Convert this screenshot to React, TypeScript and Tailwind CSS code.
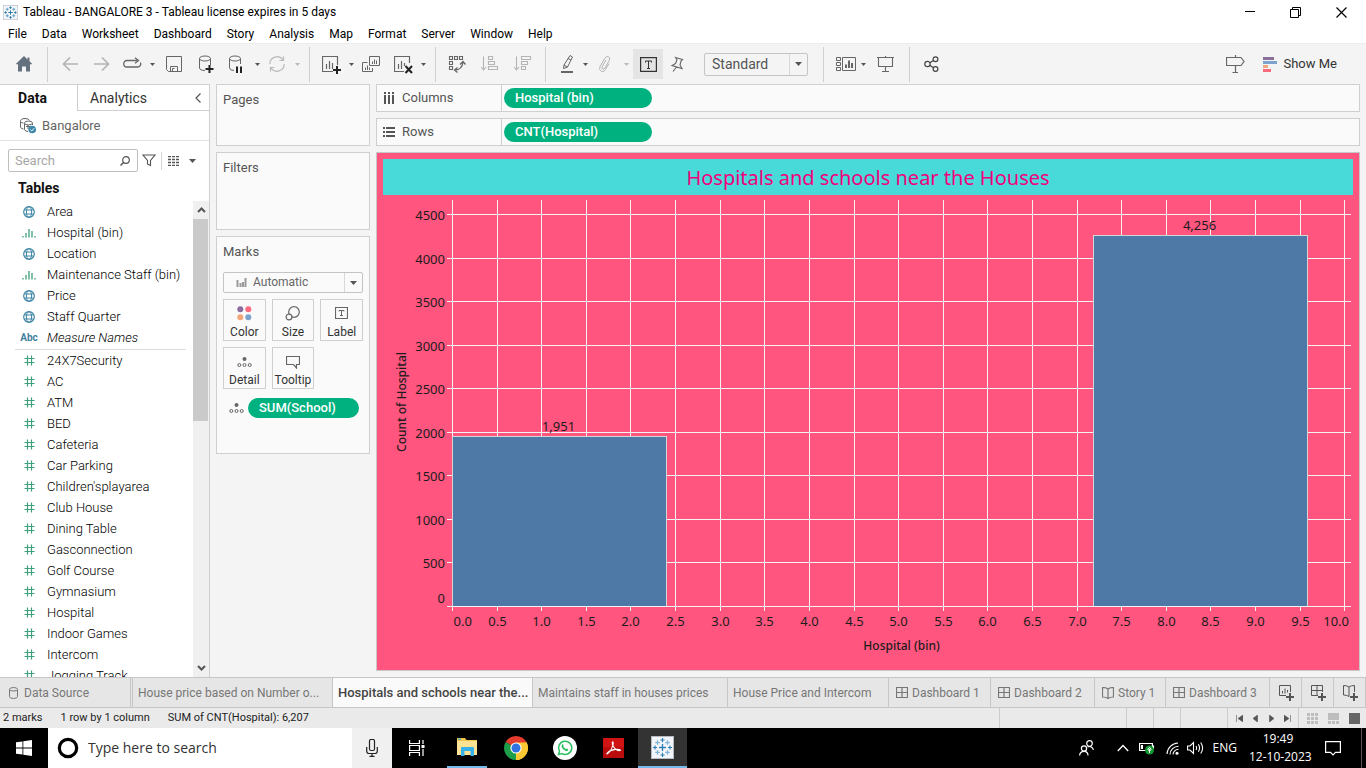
import { useLayoutEffect, useRef, useState, type ReactNode } from "react";

type IconProps = { size?: number; w?: number; h?: number; className?: string; children: ReactNode };

function Svg({ size = 20, w, h, className = "", children }: IconProps) {
  const width = w ?? size;
  const height = h ?? size;
  return (
    <svg
      width={width}
      height={height}
      viewBox={`0 0 ${width} ${height}`}
      fill="none"
      stroke="currentColor"
      aria-hidden="true"
      className={`shrink-0 ${className}`}
    >
      {children}
    </svg>
  );
}

/* ---------- Tableau mark ---------- */

function TableauMark({ size, light = false }: { size: number; light?: boolean }) {
  const plus = (x: number, y: number, r: number, color: string, sw: number) => (
    <path key={`${x}-${y}`} d={`M${x - r} ${y}H${x + r}M${x} ${y - r}V${y + r}`} stroke={color} strokeWidth={sw} />
  );
  const dark = light ? "#2f7fb5" : "#1f6f9f";
  const pale = light ? "#7fb2d6" : "#4a94bb";
  return (
    <svg width={size} height={size} viewBox="0 0 24 24" fill="none" aria-hidden="true" className="shrink-0">
      <rect x="0.5" y="0.5" width="23" height="23" fill="#f2f6fa" stroke="#b9bec4" />
      {plus(12, 12, 3.6, dark, 1.4)}
      {plus(12, 4.2, 2.2, dark, 1.2)}
      {plus(12, 19.8, 2.2, dark, 1.2)}
      {plus(4.2, 12, 2.2, dark, 1.2)}
      {plus(19.8, 12, 2.2, dark, 1.2)}
      {plus(6.8, 6.8, 2.4, pale, 1.3)}
      {plus(17.2, 6.8, 2.4, pale, 1.3)}
      {plus(6.8, 17.2, 2.4, pale, 1.3)}
      {plus(17.2, 17.2, 2.4, pale, 1.3)}
    </svg>
  );
}

/* ---------- Title and menu bars ---------- */

const menus = ["File", "Data", "Worksheet", "Dashboard", "Story", "Analysis", "Map", "Format", "Server", "Window", "Help"];

function TitleBar() {
  return (
    <header className="flex h-6 shrink-0 items-center bg-white pl-[3px] text-black">
      <TableauMark size={15} />
      <h1 className="ml-[5px] flex-1 text-[12px] leading-4">Tableau - BANGALORE 3 - Tableau license expires in 5 days</h1>
      <button aria-label="Minimize" className="flex w-[46px] justify-center">
        <Svg size={11}><path d="M0 4.500H10" /></Svg>
      </button>
      <button aria-label="Restore" className="flex w-[45px] justify-center">
        <Svg size={11}><path d="M.5 2.500H8.500V10.500H.5ZM2.500 2.500V.5H10.500V8.500H8.500" /></Svg>
      </button>
      <button aria-label="Close" className="mr-[2px] flex w-[46px] justify-center">
        <Svg size={11}><path d="M.5 .5L10.500 10.500M10.500 .5L.5 10.500" strokeWidth="1.200" /></Svg>
      </button>
    </header>
  );
}

function MenuBar() {
  return (
    <nav className="flex h-[19px] shrink-0 items-center gap-[15px] bg-white pl-2 text-[12px] leading-4 text-black">
      {menus.map((m) => (
        <button key={m}>{m}</button>
      ))}
    </nav>
  );
}

/* ---------- Toolbar ---------- */

function Tool({ label, className, children }: { label: string; className: string; children: ReactNode }) {
  return (
    <button aria-label={label} title={label} className={`flex h-[30px] shrink-0 items-center justify-center ${className}`}>
      {children}
    </button>
  );
}

function Caret({ label, faded = false, className = "" }: { label: string; faded?: boolean; className?: string }) {
  return (
    <button aria-label={label} className={`flex h-[30px] w-3 shrink-0 items-center justify-center ${faded ? "text-[#b9b9b9]" : "text-[#555]"} ${className}`}>
      <Svg w={5} h={3}><path d="M0 0H5L2.500 3Z" fill="currentColor" stroke="none" /></Svg>
    </button>
  );
}

function Sep({ className = "" }: { className?: string }) {
  return <span className={`h-[35px] w-px shrink-0 bg-[#d0d0d0] ${className}`} />;
}

function DropArrow() {
  return (
    <svg width="7" height="5" viewBox="0 0 7 5" aria-hidden="true" className="pointer-events-none absolute right-[5px] top-1/2 -translate-y-1/2">
      <path d="M0 .5H7L3.500 4.500Z" fill="#555" />
    </svg>
  );
}

function Toolbar() {
  return (
    <div role="toolbar" aria-label="Main" className="flex h-[41px] shrink-0 items-center border-t border-[#ececec] bg-[#f4f4f4] text-[#666]">
      <Tool label="Start page" className="w-[47px] text-[#64707d]">
        <Svg size={18}><path d="M9 1L.5 9.300H3V16.500H7V11.500H11V16.500H15V9.300H17.500L14.500 6.300V2.500H12.500V4.400Z" fill="currentColor" stroke="none" /></Svg>
      </Tool>
      <Sep />
      <Tool label="Undo" className="ml-[6px] w-8 text-[#b4b4b4]">
        <Svg size={16}><path d="M16 8H1M8 1.500L1.500 8L8 14.500" strokeWidth="1.700" /></Svg>
      </Tool>
      <Tool label="Redo" className="w-8 text-[#b4b4b4]">
        <Svg size={16}><path d="M0 8H15M8 1.500L14.500 8L8 14.500" strokeWidth="1.700" /></Svg>
      </Tool>
      <Tool label="Replay" className="w-7">
        <Svg w={19} h={14}>
          <path d="M8 3.500H4A3.250 3.250 0 0 0 4 10H14.500A3.250 3.250 0 0 0 17.500 5.500M6 3.500H14" strokeWidth="1.300" />
          <path d="M12 .8L15.500 3.500L12 6.200" strokeWidth="1.300" />
        </Svg>
      </Tool>
      <Caret label="Replay options" />
      <Tool label="Save" className="w-8">
        <Svg size={17}><path d="M.5 .5H15.500V15.500H2.500L.5 13.500ZM4.500 15.500V10.500H11.500V15.500M6.500 15.500V12.500H8.500" /></Svg>
      </Tool>
      <Tool label="New data source" className="w-8">
        <Svg size={18}>
          <ellipse cx="8" cy="3.500" rx="5.500" ry="2.500" />
          <path d="M2.500 3.500V13Q3 15.500 8 15.500M13.500 3.500V10" />
          <path d="M8.500 14H16.500M12.500 10V18" stroke="#222" strokeWidth="2" />
        </Svg>
      </Tool>
      <Tool label="Pause updates" className="w-7">
        <Svg size={18}>
          <ellipse cx="8" cy="3.500" rx="5.500" ry="2.500" />
          <path d="M2.500 3.500V13Q3 15.500 7 15.500M13.500 3.500V9" />
          <path d="M10 11.500V18M14 11.500V18" stroke="#222" strokeWidth="2" />
        </Svg>
      </Tool>
      <Caret label="Pause options" className="ml-px" />
      <Tool label="Refresh" className="ml-px w-[26px] text-[#b9b9b9]">
        <Svg size={18}>
          <path d="M1.800 9A7.200 7.200 0 0 1 15 5M16.200 9A7.200 7.200 0 0 1 3 13" strokeWidth="1.200" />
          <path d="M11.500 5.500H15.500V1.500M6.500 12.500H2.500V16.500" strokeWidth="1.200" />
        </Svg>
      </Tool>
      <Caret label="Refresh options" faded className="ml-px" />
      <Sep className="ml-[6px]" />
      <Tool label="New worksheet" className="ml-[7px] w-7">
        <Svg size={19}>
          <path d="M11 16.500H.5V1.500H15.500V10M4.500 14V9M7.500 14V6M10.500 14V8" strokeWidth="1.200" />
          <path d="M11 15H19M15 11V19" stroke="#222" strokeWidth="2" />
        </Svg>
      </Tool>
      <Caret label="Worksheet options" />
      <Tool label="Duplicate" className="w-7">
        <Svg size={18}>
          <path d="M7.500 1.500H17.500V10.500H7.500ZM5.500 7.500H.5V16.500H10.500V13M10.500 9V6.500M12.500 9V4.500M14.500 9V5.500M3.500 15V12.500M5.500 15V10.500M7.500 15V12.500" />
        </Svg>
      </Tool>
      <Tool label="Clear sheet" className="ml-1 w-7">
        <Svg size={19}>
          <path d="M10 16.500H.5V1.500H15.500V8M4.500 14V9M7.500 14V6M10.500 11V8" strokeWidth="1.200" />
          <path d="M11.500 11L18 18M18 11L11.500 18" stroke="#222" strokeWidth="2" />
        </Svg>
      </Tool>
      <Caret label="Clear options" />
      <Sep className="ml-[6px]" />
      <Tool label="Swap rows and columns" className="ml-[5px] w-8">
        <Svg size={18}>
          <path d="M1.500 1.500H4.500V4.500H1.500ZM6.500 1.500H9.500V4.500H6.500ZM11.500 1.500H14.500V4.500H11.500ZM1.500 6.500H4.500V9.500H1.500ZM1.500 11.500H4.500V14.500H1.500Z" strokeWidth="1.100" />
          <path d="M7 15Q14 15 15 7M12 9.500L15 6.500L17.500 9.500M9.500 12.500L6.500 15L9.500 17.500" strokeWidth="1.300" />
        </Svg>
      </Tool>
      <Tool label="Sort ascending" className="ml-px w-8 text-[#b4b4b4]">
        <Svg size={18}><path d="M2.500 1.500V15M0 12L2.500 15L5 12M7.500 1.500H11.500V4.500H7.500ZM7.500 6.500H13.500V9.500H7.500ZM7.500 11.500H16.500V14.500H7.500Z" strokeWidth="1.100" /></Svg>
      </Tool>
      <Tool label="Sort descending" className="ml-px w-8 text-[#b4b4b4]">
        <Svg size={18}><path d="M2.500 1.500V15M0 12L2.500 15L5 12M7.500 1.500H16.500V4.500H7.500ZM7.500 6.500H13.500V9.500H7.500ZM7.500 11.500H11.500V14.500H7.500Z" strokeWidth="1.100" /></Svg>
      </Tool>
      <Sep className="ml-[6px]" />
      <Tool label="Highlight" className="ml-2 w-[26px]">
        <Svg w={14} h={20}>
          <path d="M10 1.500L12.500 3L7.500 13L3.500 14.500L4 11ZM4 11L7.500 13M8 4.500L11 6" />
          <path d="M1 18H13" strokeWidth="2" />
        </Svg>
      </Tool>
      <Caret label="Highlight options" className="-ml-px" />
      <Tool label="Group members" className="w-7 text-[#b4b4b4]">
        <Svg size={18}><path d="M10 5L6 12Q5.500 14 7 14.200Q8.300 14.300 9 13L13.500 5Q14.500 2 12 1.500Q10 1.300 9 3L4 11.500Q2.500 15 5.500 16.500Q8 17.300 9.500 14.500L13 8.500" /></Svg>
      </Tool>
      <Caret label="Group options" faded className="ml-px" />
      <Tool label="Show mark labels" className="ml-px w-[30px] bg-[#e4e4e4] text-[#333]">
        <Svg w={17} h={15}>
          <path d="M.6 .6H16.400V14.400H.6Z" strokeWidth="1.200" />
          <path d="M5.500 5.500V4H11.500V5.500M8.500 4V11.500M7 11.500H10" />
        </Svg>
      </Tool>
      <Tool label="Fix axes" className="w-7">
        <Svg w={14} h={17}><path d="M5.500 1.500L12.500 3.500L11 5L10 9L12 12.500L2 9.500L5.500 7.500L7 3.800ZM6.500 11L3 15.500" strokeWidth="1.100" /></Svg>
      </Tool>
      <div className="relative ml-[13px] flex h-[23px] w-[104px] shrink-0 rounded-[2px] border border-[#c4c4c4]">
        <select aria-label="Fit" className="w-full appearance-none pl-[7px] text-[14px] leading-[21px] text-[#555] outline-none">
          <option>Standard</option>
          <option>Entire View</option>
        </select>
        <span className="pointer-events-none absolute right-[17px] top-0 h-full w-px bg-[#d8d8d8]" />
        <DropArrow />
      </div>
      <Sep className="ml-[15px]" />
      <Tool label="Show or hide cards" className="ml-[9px] w-[26px]">
        <Svg w={20} h={16}>
          <path d="M.5 1.500H4.500V4.500H.5ZM.5 6.500H4.500V9.500H.5ZM.5 11.500H4.500V14.500H.5ZM6.500 1.500H19.500V14.500H6.500Z" />
          <path d="M10 12V8.500M13 12V4.500M16 12V7" strokeWidth="2" />
        </Svg>
      </Tool>
      <Caret label="Card options" className="-ml-[2px]" />
      <Tool label="Presentation mode" className="w-8">
        <Svg w={17} h={17}><path d="M0 1.500H17M1.500 1.500V10.500H15.500V1.500M8.500 0V1.500M8.500 10.500V16M5 15.500H12" strokeWidth="1.100" /></Svg>
      </Tool>
      <Sep className="ml-2" />
      <Tool label="Share" className="ml-2 w-7 text-[#444]">
        <Svg size={16}>
          <circle cx="3.500" cy="8" r="2.700" strokeWidth="1.200" />
          <circle cx="11.500" cy="3.200" r="2.400" strokeWidth="1.200" />
          <circle cx="11.500" cy="13" r="2.400" strokeWidth="1.200" />
          <path d="M5.800 6.700L9.500 4.400M5.800 9.300L9.500 11.700" strokeWidth="1.200" />
        </Svg>
      </Tool>
      <span className="flex-1" />
      <Tool label="Guide" className="w-7">
        <Svg w={19} h={18}><path d="M.5 2.500H15L18 6.500L15 10.500H.5ZM9.500 0V2.500M9.500 10.500V17M6.500 17.500H12" strokeWidth="1.200" /></Svg>
      </Tool>
      <button className="ml-[14px] mr-[29px] flex items-center gap-[6px] text-[13px] leading-5 text-[#333]">
        <Svg w={14} h={15}>
          <path d="M0 1.500H11" stroke="#8b6f9b" strokeWidth="3" />
          <path d="M0 5.500H14" stroke="#7ea3cc" strokeWidth="3" />
          <path d="M0 9.500H5" stroke="#f2a67c" strokeWidth="3" />
          <path d="M0 13.500H8" stroke="#fb6a7c" strokeWidth="3" />
        </Svg>
        Show Me
      </button>
    </div>
  );
}

/* ---------- Data pane ---------- */

type FieldKind = "geo" | "bin" | "text" | "number";
const dimensions: { name: string; kind: FieldKind }[] = [
  { name: "Area", kind: "geo" },
  { name: "Hospital (bin)", kind: "bin" },
  { name: "Location", kind: "geo" },
  { name: "Maintenance Staff (bin)", kind: "bin" },
  { name: "Price", kind: "geo" },
  { name: "Staff Quarter", kind: "geo" },
  { name: "Measure Names", kind: "text" },
];
const measures = [
  "24X7Security", "AC", "ATM", "BED", "Cafeteria", "Car Parking", "Children'splayarea", "Club House", "Dining Table",
  "Gasconnection", "Golf Course", "Gymnasium", "Hospital", "Indoor Games", "Intercom", "Jogging Track",
];

function FieldIcon({ kind }: { kind: FieldKind }) {
  if (kind === "geo")
    return (
      <Svg size={12} className="text-[#3f86a6]">
        <circle cx="6" cy="6" r="5.300" strokeWidth="1.200" />
        <ellipse cx="6" cy="6" rx="2.600" ry="5.300" />
        <path d="M1.500 4H10.500M1.500 8H10.500" />
      </Svg>
    );
  if (kind === "bin")
    return (
      <Svg w={14} h={10} className="text-[#4aa583]">
        <path d="M1 8V9.500M4 5V9.500M7 1V9.500M10 3V9.500M13 8V9.500" strokeWidth="1.400" />
      </Svg>
    );
  if (kind === "text") return <span className="text-[10px] font-bold not-italic text-[#3f7f9c]">Abc</span>;
  return (
    <Svg size={11} className="text-[#3fa07c]">
      <path d="M3.500 .5V10.500M7.500 .5V10.500M.5 3.500H10.500M.5 7.500H10.500" strokeWidth="1.200" />
    </Svg>
  );
}

function Field({ name, kind }: { name: string; kind: FieldKind }) {
  return (
    <li className={`flex h-[21px] items-center text-[13px] leading-4 text-black ${kind === "text" ? "italic" : ""}`}>
      <span className="ml-[17px] mr-[6px] flex w-6 justify-center">
        <FieldIcon kind={kind} />
      </span>
      <span className="whitespace-nowrap font-light">{name}</span>
    </li>
  );
}

function DataPane() {
  return (
    <aside className="flex w-[210px] shrink-0 flex-col border-r border-t border-[#cfcfcf] bg-white">
      <div className="flex h-[26px] shrink-0" role="tablist">
        <button role="tab" aria-selected="true" className="w-[77px] pr-3 text-center text-[14px] font-bold leading-5 text-[#111]">Data</button>
        <div className="flex flex-1 items-center border-b border-l border-[#cfcfcf]">
          <button role="tab" aria-selected="false" className="flex-1 pl-3 text-left text-[14px] leading-5 text-[#333]">Analytics</button>
          <button aria-label="Collapse pane" className="mr-[7px] text-[#555]">
            <Svg w={7} h={10}><path d="M5.500 .5L1 5L5.500 9.500" strokeWidth="1.200" /></Svg>
          </button>
        </div>
      </div>
      <button className="flex h-[30px] shrink-0 items-center gap-[6px] border-b border-[#e2e2e2] pl-5 text-[13px] leading-4 text-[#666]">
        <Svg w={16} h={17}>
          <path d="M.5 4.500V10Q1 12 3.500 12M.5 4.500Q.5 1.500 5 1.500Q9 1.500 9.500 3.500M.5 4.500Q1 6 3.500 6M4.500 6.500V12.500Q5 14.500 8 14.500M12.500 6.500V8" />
          <ellipse cx="8.500" cy="6" rx="4" ry="1.900" />
          <path d="M6 9.500H10M8 8V12" />
          <circle cx="12.200" cy="12.500" r="3.800" fill="#3a87a8" stroke="none" />
          <path d="M10.300 12.600L11.800 14L14.200 11.200" stroke="#fff" />
        </Svg>
        Bangalore
      </button>
      <div className="flex shrink-0 items-center pl-2 pt-[8px] text-[#555]">
        <div className="relative flex h-[23px] w-[130px] items-center rounded-[2px] border border-[#bfbfbf]">
          <input aria-label="Search fields" placeholder="Search" className="h-full w-full bg-transparent pl-[6px] text-[13px] leading-5 outline-none placeholder:text-[#a6a6a6]" />
          <Svg size={10} className="absolute right-[7px]">
            <circle cx="6" cy="4" r="3.300" strokeWidth="1.200" /><path d="M3.600 6.400L.5 9.500" strokeWidth="1.400" />
          </Svg>
        </div>
        <button aria-label="Filter fields" className="ml-1">
          <Svg w={14} h={13}><path d="M1 1H13L8.500 6.500V11.500L5.500 10V6.500Z" strokeWidth="1.100" /></Svg>
        </button>
        <span className="ml-[5px] h-[18px] w-px bg-[#d6d6d6]" />
        <button aria-label="View as list" className="ml-[6px] flex items-center gap-[9px]">
          <Svg w={12} h={10}>
            <path d="M0 .5H12M0 3.500H12M0 6.500H12M0 9.500H12" strokeDasharray="3 1" strokeWidth="1.400" />
          </Svg>
          <Svg w={7} h={4}><path d="M0 0H7L3.500 4Z" fill="currentColor" stroke="none" /></Svg>
        </button>
      </div>
      <h2 className="shrink-0 pb-[4px] pl-[18px] pt-[7px] text-[14px] font-bold leading-[18px] text-[#111]">Tables</h2>
      <div className="flex min-h-0 flex-1">
        <div className="min-w-0 flex-1 overflow-hidden">
          <ul>
            {dimensions.map((f) => (
              <Field key={f.name} {...f} />
            ))}
          </ul>
          <div className="ml-[15px] mr-[7px] h-[2px] border-b border-[#dcdcdc]" />
          <ul>
            {measures.map((m) => (
              <Field key={m} name={m} kind="number" />
            ))}
          </ul>
        </div>
        <div className="flex w-4 shrink-0 flex-col items-center bg-[#f0f0f0] text-[#555]">
          <span className="flex h-[18px] items-center"><Svg w={9} h={6}><path d="M1 5L4.500 1.500L8 5" strokeWidth="2" /></Svg></span>
          <span className="h-[202px] w-full border-r border-[#f0f0f0] bg-[#cacaca]" />
          <span className="flex-1" />
          <span className="flex h-[18px] items-center"><Svg w={9} h={6}><path d="M1 1L4.500 4.500L8 1" strokeWidth="2" /></Svg></span>
        </div>
      </div>
    </aside>
  );
}

/* ---------- Cards ---------- */

function Card({ title, className, children }: { title: string; className: string; children?: ReactNode }) {
  return (
    <section className={`border border-[#cfcfcf] bg-[#fafafa] px-[6px] pt-[7px] ${className}`}>
      <h2 className="text-[13px] leading-4 text-[#555]">{title}</h2>
      {children}
    </section>
  );
}

const detailIcon = (
  <Svg w={15} h={12}>
    <circle cx="7.500" cy="3" r="2" fill="currentColor" stroke="none" />
    <circle cx="2.300" cy="9" r="1.500" /><circle cx="7.500" cy="9" r="1.500" /><circle cx="12.700" cy="9" r="1.500" />
  </Svg>
);

const markButtons: { label: string; icon: ReactNode }[] = [
  {
    label: "Color",
    icon: (
      <Svg w={15} h={15}>
        <g stroke="none">
          <circle cx="3.300" cy="3.300" r="3" fill="#8a6d9e" /><circle cx="11.300" cy="3.300" r="3" fill="#fd6a80" />
          <circle cx="3.300" cy="11.300" r="3" fill="#f3a57c" /><circle cx="11.300" cy="11.300" r="3" fill="#7ba2cd" />
        </g>
      </Svg>
    ),
  },
  { label: "Size", icon: <Svg w={15} h={15}><circle cx="9" cy="6" r="5.300" strokeWidth="1.200" /><circle cx="4" cy="11" r="2.900" strokeWidth="1.200" fill="#fafafa" /></Svg> },
  { label: "Label", icon: <Svg w={13} h={15}><path d="M.5 1.500H12.500V12.500H.5Z" strokeWidth="1.200" /><path d="M4 5.500V4.500H9V5.500M6.500 4.500V9.500M5 9.500H8" /></Svg> },
  { label: "Detail", icon: detailIcon },
  { label: "Tooltip", icon: <Svg w={14} h={14}><path d="M.5 1.500H13.500V9.500H10.500V13L7.500 9.500H.5Z" strokeWidth="1.200" /></Svg> },
];

function Cards() {
  return (
    <div className="flex w-[154px] shrink-0 flex-col gap-[6px]">
      <Card title="Pages" className="h-[62px]" />
      <Card title="Filters" className="h-[78px]" />
      <Card title="Marks" className="h-[218px]">
        <div className="relative mt-3 flex h-[21px] rounded-[2px] border border-[#c4c4c4] text-[#999]">
          <Svg w={11} h={10} className="absolute left-3 top-[5px]"><path d="M1.500 2V9M4.500 5V9M7 4V9M9.500 0V9" strokeWidth="2" /></Svg>
          <select aria-label="Mark type" className="w-full appearance-none pl-[29px] text-[12px] leading-[19px] text-[#666] outline-none">
            <option>Automatic</option>
            <option>Bar</option>
          </select>
          <span className="pointer-events-none absolute right-[17px] top-0 h-full w-px bg-[#d8d8d8]" />
          <DropArrow />
        </div>
        <div className="mt-[6px] grid grid-cols-3 gap-[6px]">
          {markButtons.map((b) => (
            <button key={b.label} className="flex h-[42px] flex-col items-center justify-between border border-[#cfcfcf] pt-[6px] text-[12px] leading-4 text-[#333]">
              <span className="flex h-[15px] items-center text-[#666]">{b.icon}</span>
              {b.label}
            </button>
          ))}
        </div>
        <div className="mt-[9px] flex items-center pl-[6px] text-[#666]">
          {detailIcon}
          <button className="ml-1 h-5 w-[111px] rounded-full bg-[#00b180] pl-[11px] text-left text-[13px] font-medium leading-5 text-white">SUM(School)</button>
        </div>
      </Card>
    </div>
  );
}

/* ---------- Shelves ---------- */

function Shelf({ label, icon, pill }: { label: string; icon: ReactNode; pill: string }) {
  return (
    <div className="flex h-7 shrink-0 border border-[#cfcfcf] bg-[#fafafa]">
      <div className="flex w-[125px] items-center gap-[6px] border-r border-[#cfcfcf] pl-[6px] text-[13px] leading-4 text-[#555]">
        {icon}
        {label}
      </div>
      <button className="ml-[2px] mt-[3px] h-5 w-[148px] rounded-full bg-[#00b180] pl-[11px] text-left text-[13px] font-medium leading-5 text-white">{pill}</button>
    </div>
  );
}

/* ---------- Chart ---------- */

const bars = [
  { from: 0, to: 2.4, value: 1951, label: "1,951" },
  { from: 7.18, to: 9.58, value: 4256, label: "4,256" },
];
const xTicks = Array.from({ length: 21 }, (_, i) => i / 2);
const yTicks = Array.from({ length: 10 }, (_, i) => i * 500);

function Chart() {
  const box = useRef<HTMLDivElement>(null);
  const [size, setSize] = useState({ w: 970, h: 474 });

  useLayoutEffect(() => {
    const el = box.current;
    if (!el) return;
    const measure = () => setSize({ w: el.clientWidth, h: el.clientHeight });
    measure();
    const observer = new ResizeObserver(measure);
    observer.observe(el);
    return () => observer.disconnect();
  }, []);

  const left = 69;
  const right = size.w - 2;
  const top = 5;
  const bottom = size.h - 64;
  const x = (v: number) => Math.round(left + (v * (right - left)) / 10.075) + 0.5;
  const y = (v: number) => Math.round(bottom - (v * (bottom - top)) / 4663) + 0.5;

  return (
    <div ref={box} className="min-h-0 flex-1 overflow-hidden">
      <svg width={size.w} height={size.h} role="img" aria-label="Histogram of hospital count" className="block font-['Noto_Sans',sans-serif] text-[13px]" fill="#1c1c1c">
        <g stroke="#f3f3f3" strokeWidth="1">
          {xTicks.map((t) => (
            <line key={t} x1={x(t)} x2={x(t)} y1={top} y2={bottom + 5} />
          ))}
          {yTicks.map((t) => (
            <line key={t} x1={left - 5} x2={right} y1={y(t)} y2={y(t)} />
          ))}
        </g>
        {bars.map((b) => (
          <g key={b.from}>
            <rect x={x(b.from)} y={y(b.value)} width={x(b.to) - x(b.from)} height={y(0) - y(b.value)} fill="#4e79a7" stroke="#d5d5d5" />
            <text x={(x(b.from) + x(b.to)) / 2 - 1} y={y(b.value) - 6} textAnchor="middle">{b.label}</text>
          </g>
        ))}
        <line x1={left - 5} x2={right} y1={y(0)} y2={y(0)} stroke="#f3f3f3" />
        {yTicks.map((t) => (
          <text key={t} x={left - 7} y={t === 0 ? y(0) - 4 : y(t) + 5} textAnchor="end">{t}</text>
        ))}
        {xTicks.map((t) => (
          <text key={t} x={t === 0 ? x(0) + 1 : t === 10 ? right - 2 : x(t)} y={bottom + 20} textAnchor={t === 0 ? "start" : t === 10 ? "end" : "middle"}>
            {t.toFixed(1)}
          </text>
        ))}
        <text x={(left + right) / 2} y={bottom + 44} textAnchor="middle" className="text-[12px] font-medium">Hospital (bin)</text>
        <text transform={`translate(23 ${(top + bottom) / 2 - 1}) rotate(-90)`} textAnchor="middle" className="text-[12px] font-medium">Count of Hospital</text>
      </svg>
    </div>
  );
}

function Worksheet() {
  return (
    <main className="flex min-w-0 flex-1 flex-col gap-[6px] pb-[6px]">
      <Shelf
        label="Columns"
        pill="Hospital (bin)"
        icon={<Svg w={13} h={12}><path d="M2 0V2M6 0V2M10 0V2M2 3V12M6 3V12M10 3V12" strokeWidth="2" /></Svg>}
      />
      <Shelf
        label="Rows"
        pill="CNT(Hospital)"
        icon={<Svg w={13} h={12}><path d="M0 2H2M0 6H2M0 10H2M3 2H12M3 6H12M3 10H12" strokeWidth="2" /></Svg>}
      />
      <section className="flex min-h-0 flex-1 flex-col border border-[#c8c8c8] bg-[#ff557f] px-[6px] pt-[6px]">
        <h2 className="h-9 shrink-0 bg-[#48d9d9] pt-px text-center font-['Noto_Sans',sans-serif] text-[20px] leading-9 text-[#f0007c]">
          Hospitals and schools near the Houses
        </h2>
        <Chart />
      </section>
    </main>
  );
}

/* ---------- Sheet tabs ---------- */

const gridIcon = <Svg size={12}><path d="M.5 .5H11.500V10.500H.5ZM6 .5V10.500M.5 5.500H11.500" strokeWidth="1.200" /></Svg>;
const bookPath = "M6 2Q4 .5 .5 .5V10Q4 10 6 11.500Q8 10 11.500 10V.5Q8 .5 6 2V11.500";
const plusPath = "M8 12H16M12 8V16";

const sheets: { name: string; icon?: ReactNode; width: string; active?: boolean }[] = [
  { name: "House price based on Number o...", width: "w-[201px] border-l pl-[5px]" },
  { name: "Hospitals and schools near the...", width: "w-[200px] pl-[5px]", active: true },
  { name: "Maintains staff in houses prices", width: "w-[195px] pl-[5px]" },
  { name: "House Price and Intercom", width: "w-[161px] pl-[5px]" },
  { name: "Dashboard 1", width: "w-[102px] pl-[7px]", icon: gridIcon },
  { name: "Dashboard 2", width: "w-[104px] pl-[7px]", icon: gridIcon },
  { name: "Story 1", width: "w-[71px] pl-[7px]", icon: <Svg size={12}><path d={bookPath} strokeWidth="1.200" /></Svg> },
  { name: "Dashboard 3", width: "w-[104px] pl-[7px]", icon: gridIcon },
];

function SheetTabs() {
  return (
    <div role="tablist" className="flex h-[31px] shrink-0 border-b border-t border-[#c6c6c6] bg-[#e6e6e6] text-[12px] leading-4 text-[#777]">
      <button className="mr-px flex w-[131px] shrink-0 items-center gap-[6px] border-r border-[#c6c6c6] pl-[9px]">
        <Svg w={9} h={12}><path d="M.5 2.500V9.500Q.5 11.500 4.500 11.500T8.500 9.500V2.500Q8.500 .5 4.500 .5T.5 2.500Q.5 4 4.500 4T8.500 2.500" /></Svg>
        Data Source
      </button>
      {sheets.map((s) => (
        <button
          key={s.name}
          role="tab"
          aria-selected={!!s.active}
          className={`flex shrink-0 items-center gap-[4px] whitespace-nowrap border-r border-[#c6c6c6] ${s.width} ${s.active ? "bg-[#fafafa] text-[13px] font-medium text-[#444]" : ""}`}
        >
          {s.icon}
          {s.name}
        </button>
      ))}
      <button aria-label="New worksheet" className="flex w-8 shrink-0 items-center justify-center border-r border-[#c6c6c6] text-[#555]">
        <Svg size={16}><path d="M8 10.500H1.500V.5H12.500V7M4.500 8.500V6M7 8.500V3.500M9.500 7.500V5" /><path d={plusPath} strokeWidth="2" /></Svg>
      </button>
      <button aria-label="New dashboard" className="flex w-8 shrink-0 items-center justify-center border-r border-[#c6c6c6] text-[#555]">
        <Svg size={16}><path d="M8 10.500H1.500V.5H12.500V7M7 .5V10.500M1.500 5.500H12.500" /><path d={plusPath} strokeWidth="2" /></Svg>
      </button>
      <button aria-label="New story" className="flex w-8 shrink-0 items-center justify-center border-r border-[#c6c6c6] text-[#555]">
        <Svg size={16}><path d="M7 11.500Q5 10 1.500 10V.5Q5 .5 7 2Q9 .5 12.500 .5V7M7 2V11.500" /><path d={plusPath} strokeWidth="2" /></Svg>
      </button>
    </div>
  );
}

function StatusBar() {
  const nav = [
    { label: "First sheet", d: "M.5 0V7M7 0V7L2 3.500Z" },
    { label: "Previous sheet", d: "M5.500 0V7L1 3.500Z" },
    { label: "Next sheet", d: "M1.500 0V7L6 3.500Z" },
    { label: "Last sheet", d: "M6.500 0V7M0 0V7L5 3.500Z" },
  ];
  return (
    <footer className="flex h-5 shrink-0 items-center bg-[#eaeaea] pl-[3px] text-[11px] leading-4 text-[#222]">
      <span>2 marks</span>
      <span className="ml-[18px]">1 row by 1 column</span>
      <span className="ml-[18px]">SUM of CNT(Hospital): 6,207</span>
      <span className="flex-1" />
      <span className="h-full w-[127px] border-l border-[#cccccc]" />
      <span className="h-full w-[27px] border-l border-[#cccccc]" />
      <span className="h-full w-[27px] border-l border-[#cccccc]" />
      <span className="h-full w-[47px] border-l border-[#cccccc]" />
      <div className="flex h-full w-[71px] items-center border-l border-[#cccccc] pl-[3px] text-[#555]">
        {nav.map((n) => (
          <button key={n.label} aria-label={n.label} className="flex w-4 justify-center">
            <Svg size={7}><path d={n.d} fill="currentColor" strokeWidth=".6" /></Svg>
          </button>
        ))}
      </div>
      <div className="flex h-full w-[68px] items-center gap-[10px] border-l border-[#cccccc] pl-[8px]">
        <button aria-label="Sheet sorter">
          <Svg size={11} className="text-[#bdbdbd]"><path d="M0 1.500H11M0 5.500H11M0 9.500H11" strokeWidth="3" strokeDasharray="3 1" /></Svg>
        </button>
        <button aria-label="Filmstrip">
          <Svg size={11} className="text-[#bdbdbd]"><path d="M0 3.500H11" strokeWidth="7" /><path d="M0 9.500H11" strokeWidth="3" strokeDasharray="3 1" /></Svg>
        </button>
        <button aria-label="Tabs"><Svg size={11}><path d="M0 0H11V11H0Z" fill="#666" stroke="none" /></Svg></button>
      </div>
    </footer>
  );
}

/* ---------- Taskbar ---------- */

function TaskApp({ label, className = "", children }: { label: string; className?: string; children: ReactNode }) {
  return (
    <button aria-label={label} className={`flex h-full w-[49px] shrink-0 items-center justify-center ${className}`}>
      {children}
    </button>
  );
}

function Taskbar() {
  return (
    <div className="flex h-10 shrink-0 items-center bg-black font-['Open_Sans',sans-serif] text-white">
      <button aria-label="Start" className="flex w-12 shrink-0 justify-center">
        <Svg size={16}><path d="M0 2.300L6.500 1.400V7.600H0ZM7.300 1.300L16 0V7.600H7.300ZM0 8.400H6.500V14.600L0 13.700ZM7.300 8.400H16V16L7.300 14.700Z" fill="#fff" stroke="none" /></Svg>
      </button>
      <div className="flex h-full w-[304px] shrink-0 items-center gap-[9px] bg-white pl-[9px]">
        <Svg size={22}><circle cx="11" cy="11" r="8.700" stroke="#000" strokeWidth="3.200" /></Svg>
        <input aria-label="Search Windows" placeholder="Type here to search" className="h-6 min-w-0 flex-1 text-[14px] leading-6 text-black outline-none placeholder:text-[#333]" />
      </div>
      <button aria-label="Voice search" className="flex h-full w-10 shrink-0 items-center justify-center bg-[#f0f0f0] text-[#222]">
        <Svg w={12} h={18}><rect x="3.500" y=".5" width="5" height="11" rx="1.500" strokeWidth="1.200" /><path d="M.7 8V12Q.7 14.500 3 14.500H9Q11.300 14.500 11.300 12V8M6 14.500V17M3.500 17.400H8.500" strokeWidth="1.200" /></Svg>
      </button>
      <TaskApp label="Task view">
        <Svg size={16}><path d="M.6 0V3.500H10.400V0M.6 16V12.500H10.400V16M0 5.500H11M0 10.500H11M.6 5.500V10.500M10.400 5.500V10.500M14 0V4M14 9V16" strokeWidth="1.200" /><rect x="12.500" y="5" width="3" height="3" fill="#fff" stroke="none" /></Svg>
      </TaskApp>
      <TaskApp label="File Explorer" className="ml-px">
        <span className="flex h-full w-10 items-center justify-center border-b-2 border-[#76b9ed]">
          <Svg w={22} h={20}>
            <g stroke="none">
              <path d="M1 1H9L10.500 3H21V18H1Z" fill="#f0c64a" />
              <path d="M1 4H21V18H1Z" fill="#ffe394" />
              <path d="M2 1.500H5V2.800H2Z" fill="#46a6c9" />
              <path d="M5 11Q5 10 6 10H17Q18 10 18 11V19H14.500V14H8.500V19H5Z" fill="#38b0ea" />
            </g>
          </Svg>
        </span>
      </TaskApp>
      <TaskApp label="Chrome">
        <svg width="24" height="24" viewBox="0 0 24 24" aria-hidden="true">
          <path d="M12 12L1.610 6A12 12 0 0 1 22.390 6Z" fill="#e33b2e" />
          <path d="M12 12L22.390 6A12 12 0 0 1 12 24Z" fill="#fcc934" />
          <path d="M12 12L12 24A12 12 0 0 1 1.610 6Z" fill="#1e9e4a" />
          <path d="M12 6.500H22.600A12 12 0 0 1 12 24L16.800 14.800Z" fill="#fcc934" />
          <circle cx="12" cy="12" r="5.600" fill="#fff" />
          <circle cx="12" cy="12" r="4.500" fill="#2f73e0" />
        </svg>
      </TaskApp>
      <TaskApp label="WhatsApp">
        <svg width="24" height="24" viewBox="0 0 24 24" fill="none" aria-hidden="true">
          <circle cx="12" cy="12" r="12" fill="#fff" />
          <path d="M5.500 18.500L6.500 15.200A6.600 6.600 0 1 1 9 17.600Z" stroke="#2cc064" strokeWidth="1.500" />
          <path d="M9.300 8.300Q10.200 7.800 10.600 9.200L10.400 10.500Q11.200 12.300 13 13L14 12.500Q15.500 13 15.300 14Q14.500 15.600 12.300 14.700Q9.300 13.300 8.600 10.700Q8.400 9 9.300 8.300Z" fill="#2cc064" />
        </svg>
      </TaskApp>
      <TaskApp label="Acrobat">
        <svg width="21" height="20" viewBox="0 0 21 20" fill="none" aria-hidden="true">
          <path d="M0 0H21V20H0Z" fill="#b90d0d" />
          <path d="M0 0H21V9H0Z" fill="#d01414" />
          <path d="M4 16Q8.500 13.500 10.300 5.500Q10 3 9.300 4.500Q9 8 13 11.500Q16 13.300 17.500 12.300Q17 11 12.500 11.400Q7 12.300 4.500 14.800Q3.500 16 4 16Z" stroke="#fff" strokeWidth="1.100" />
        </svg>
      </TaskApp>
      <TaskApp label="Tableau" className="border-b-2 border-[#76b9ed] bg-[#333]">
        <TableauMark size={23} light />
      </TaskApp>
      <span className="flex-1" />
      <button aria-label="People" className="flex w-9 justify-center">
        <Svg w={15} h={16}><circle cx="10.500" cy="3.500" r="2.800" strokeWidth="1.200" /><circle cx="5" cy="8.500" r="2.600" strokeWidth="1.200" /><path d="M.6 15.500Q1 11.400 5 11.400T9 15.500M8.500 7Q10 6.300 11.500 6.600Q14 7.300 14.400 10" strokeWidth="1.200" /></Svg>
      </button>
      <button aria-label="Hidden icons" className="flex w-9 justify-center">
        <Svg w={12} h={8}><path d="M.8 7L6 1.500L11.200 7" strokeWidth="1.300" /></Svg>
      </button>
      <button aria-label="Battery" className="flex w-3 justify-center">
        <Svg w={16} h={14}>
          <path d="M.6 2.500H13.400V9.500H.6ZM14.500 4.500V7.500" strokeWidth="1.200" /><path d="M3 4V8" strokeWidth="2" />
          <circle cx="10.500" cy="9" r="4.500" fill="#149a32" stroke="none" /><path d="M10.500 12V8M8.800 8.500L10.500 6.300L12.200 8.500L10.500 10Z" />
        </Svg>
      </button>
      <button aria-label="Network" className="ml-3 flex w-4 justify-center">
        <Svg size={13}><path d="M1 12A11.500 11.500 0 0 1 12 1M4 12.500A8.500 8.500 0 0 1 12.500 4.200M7 12.500A5.500 5.500 0 0 1 12.500 7.300" strokeWidth="1.100" /><circle cx="11" cy="11.300" r="1.500" fill="#fff" stroke="none" /></Svg>
      </button>
      <button aria-label="Volume" className="ml-[6px] flex w-[17px] justify-center">
        <Svg w={17} h={14}><path d="M.6 5V9H3L6.500 12.500V1.500L3 5ZM9 5Q10.300 7 9 9M11.300 3.300Q13.800 7 11.300 10.700M13.700 1.500Q17.500 7 13.700 12.500" strokeWidth="1.100" /></Svg>
      </button>
      <button className="ml-[9px] text-[12px] leading-4">ENG</button>
      <button className="ml-3 w-[58px] whitespace-nowrap text-center text-[12px] leading-[18px]">
        19:49
        <br />
        12-10-2023
      </button>
      <button aria-label="Notifications" className="ml-[18px] flex w-4 justify-center">
        <Svg size={16}><path d="M.6 1.600H15.400V12.400H10.500L8 15L5.500 12.400H.6Z" strokeWidth="1.200" /></Svg>
      </button>
      <span className="ml-5 mr-1 h-full w-px bg-[#555]" />
    </div>
  );
}

export default function App() {
  return (
    <div className="flex h-screen min-h-[480px] flex-col overflow-hidden bg-[#f4f4f4] font-[Roboto,sans-serif]">
      <TitleBar />
      <MenuBar />
      <Toolbar />
      <div className="flex min-h-0 flex-1 gap-[6px] pr-[6px]">
        <DataPane />
        <Cards />
        <Worksheet />
      </div>
      <SheetTabs />
      <StatusBar />
      <Taskbar />
    </div>
  );
}
